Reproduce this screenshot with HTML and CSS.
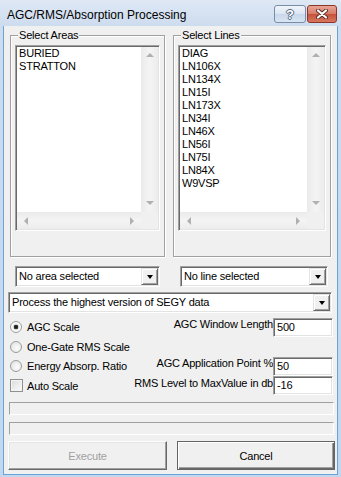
FILE: index.html
```html
<!DOCTYPE html>
<html lang="en">
<head>
    <meta charset="UTF-8">
    <title>AGC/RMS/Absorption Processing</title>
    <link rel="stylesheet" href="styles.css">
</head>
<body>
<div class="window">
    <div class="titlebar">
        <span class="title">AGC/RMS/Absorption Processing</span>
        <div class="caption-buttons">
            <span class="cap-btn help">?</span>
            <span class="cap-btn close">
                <svg width="12" height="10" viewBox="0 0 12 10">
                    <path d="M2 1.5 L10 8.5 M10 1.5 L2 8.5" stroke="#5a2a22" stroke-width="4" stroke-linecap="round"/>
                    <path d="M2 1.5 L10 8.5 M10 1.5 L2 8.5" stroke="#fff" stroke-width="2.2" stroke-linecap="round"/>
                </svg>
            </span>
        </div>
    </div>

    <div class="client">
        <div class="groups">
            <div class="group group-areas">
                <span class="group-label">Select Areas</span>
                <div class="listbox sunken">
                    <div class="items">
                        <div>BURIED</div>
                        <div>STRATTON</div>
                    </div>
                    <div class="vscroll"><span class="arr up"></span><span class="arr down"></span></div>
                    <div class="hscroll"><span class="arr left"></span><span class="arr right"></span></div>
                    <div class="corner"></div>
                </div>
            </div>
            <div class="group group-lines">
                <span class="group-label">Select Lines</span>
                <div class="listbox sunken">
                    <div class="items">
                        <div>DIAG</div>
                        <div>LN106X</div>
                        <div>LN134X</div>
                        <div>LN15I</div>
                        <div>LN173X</div>
                        <div>LN34I</div>
                        <div>LN46X</div>
                        <div>LN56I</div>
                        <div>LN75I</div>
                        <div>LN84X</div>
                        <div>W9VSP</div>
                    </div>
                    <div class="vscroll"><span class="arr up"></span><span class="arr down"></span></div>
                    <div class="hscroll"><span class="arr left"></span><span class="arr right"></span></div>
                    <div class="corner"></div>
                </div>
            </div>
        </div>

        <div class="combo-row">
            <div class="combo sunken combo-area"><span class="combo-text">No area selected</span><span class="drop"><span class="tri"></span></span></div>
            <div class="combo sunken combo-line"><span class="combo-text">No line selected</span><span class="drop"><span class="tri"></span></span></div>
        </div>
        <div class="combo sunken combo-wide"><span class="combo-text">Process the highest version of SEGY data</span><span class="drop"><span class="tri"></span></span></div>

        <div class="options">
            <div class="opt"><span class="radio checked"></span>AGC Scale</div>
            <div class="field-label">AGC Window Length</div>
            <div class="field sunken">500</div>

            <div class="opt"><span class="radio"></span>One-Gate RMS Scale</div>
            <div></div>
            <div></div>

            <div class="opt"><span class="radio"></span>Energy Absorp. Ratio</div>
            <div class="field-label">AGC Application Point %</div>
            <div class="field sunken">50</div>

            <div class="opt"><span class="check"></span>Auto Scale</div>
            <div class="field-label">RMS Level to MaxValue in db</div>
            <div class="field sunken">-16</div>
        </div>

        <div class="progress"></div>
        <div class="progress"></div>

        <div class="buttons">
            <div class="button disabled">Execute</div>
            <div class="button default">Cancel</div>
        </div>
    </div>
</div>
</body>
</html>
```
FILE: styles.css
```css
* {
    box-sizing: border-box;
}
body {
    margin: 0;
    font-family: "Liberation Sans", Arial, sans-serif;
    font-size: 11px;
    letter-spacing: -0.2px;
    color: #000;
}
.window {
    width: 341px;
    height: 477px;
    background: linear-gradient(#dfe9f5, #cddcef 26px, #c2d7ee);
    display: flex;
    flex-direction: column;
}

/* title bar */
.titlebar {
    height: 26px;
    display: flex;
    align-items: flex-start;
    padding-left: 7px;
}
.title {
    flex: 1;
    margin-top: 8px;
    font-size: 12px;
    line-height: 14px;
    letter-spacing: 0;
}
.caption-buttons {
    display: flex;
    gap: 1px;
    margin: 5px 4px 0 0;
}
.cap-btn {
    height: 18px;
    border-radius: 3px;
    display: flex;
    align-items: center;
    justify-content: center;
}
.help {
    width: 32px;
    border: 1px solid #7b8ca6;
    background: linear-gradient(#f1f5fb, #dbe5f2 50%, #c8d7eb 51%, #d9e5f3);
    color: #fff;
    font-weight: bold;
    font-size: 13px;
    letter-spacing: 0;
    text-shadow: 1px 0 #55657c, -1px 0 #55657c, 0 1px #55657c, 0 -1px #55657c;
}
.close {
    width: 30px;
    border: 1px solid #8a3528;
    background: linear-gradient(#eaa596, #d57a66 50%, #c5513b 51%, #d9765d);
}

/* client area */
.client {
    margin: 0 3px 2px;
    height: 449px;
    background: #f0f0f0;
    border: 1px solid #6aa3d9;
    border-top: 0;
    display: flex;
    flex-direction: column;
}
.sunken {
    border: 1px solid;
    border-color: #a0a0a0 #fff #fff #a0a0a0;
    padding: 1px;
    box-shadow: inset 1px 1px #696969, inset -1px -1px #e3e3e3;
    background: #fff;
}

/* group boxes */
.groups {
    display: flex;
    gap: 8px;
    margin: 9px 0 0 6px;
}
.group {
    position: relative;
    border: 1px solid #a0a0a0;
    box-shadow: inset 1px 1px #fff, 1px 1px #fff;
    padding: 9px 4px 25px;
}
.group-areas {
    width: 155px;
}
.group-lines {
    width: 158px;
}
.group-label {
    position: absolute;
    top: -7px;
    left: 7px;
    padding: 0 1px;
    line-height: 13px;
    background: #f0f0f0;
}
.listbox {
    height: 186px;
    display: grid;
    grid-template-columns: 1fr 17px;
    grid-template-rows: 1fr 17px;
}
.items {
    padding: 0 2px;
    line-height: 13px;
}
.vscroll {
    background: linear-gradient(to right, #eaeaea, #f4f4f4 50%, #ececec);
    display: flex;
    flex-direction: column;
    align-items: center;
    justify-content: space-between;
    padding: 6px 0 7px;
}
.hscroll {
    background: linear-gradient(#eaeaea, #f4f4f4 50%, #ececec);
    display: flex;
    align-items: center;
    justify-content: space-between;
    padding: 0 7px 0 7px;
}
.corner {
    background: #f0f0f0;
}
.arr {
    width: 0;
    height: 0;
    border: 4px solid transparent;
}
.arr.up {
    border-top: 0;
    border-bottom-color: #b0b0b0;
}
.arr.down {
    border-bottom: 0;
    border-top-color: #b0b0b0;
}
.arr.left {
    border-left: 0;
    border-right-color: #b0b0b0;
}
.arr.right {
    border-right: 0;
    border-left-color: #b0b0b0;
}

/* combo boxes */
.combo-row {
    display: flex;
    gap: 20px;
    margin: 9px 0 0 11px;
}
.combo {
    height: 21px;
    display: flex;
}
.combo-area {
    width: 145px;
}
.combo-line {
    width: 148px;
}
.combo-wide {
    width: 324px;
    margin: 5px 0 0 4px;
}
.combo-text {
    flex: 1;
    padding-left: 2px;
    line-height: 17px;
    white-space: nowrap;
}
.drop {
    width: 17px;
    background: #f0f0f0;
    border: 1px solid;
    border-color: #e3e3e3 #696969 #696969 #e3e3e3;
    box-shadow: inset 1px 1px #fff, inset -1px -1px #a0a0a0;
    display: flex;
    align-items: center;
    justify-content: center;
}
.tri {
    width: 0;
    height: 0;
    border-left: 3.5px solid transparent;
    border-right: 3.5px solid transparent;
    border-top: 4px solid #000;
}

/* options */
.options {
    display: grid;
    grid-template-columns: 1fr auto 60px;
    grid-template-rows: 20px 19px 20px 19px;
    margin-top: 4px;
    padding: 0 4px 0 6px;
}
.opt {
    display: flex;
    align-items: center;
    white-space: nowrap;
}
.radio {
    width: 12px;
    height: 12px;
    margin-right: 5px;
    border-radius: 50%;
    border: 1px solid #9a9b9b;
    background: radial-gradient(circle at 60% 60%, #fcfcfc, #dedede);
}
.radio.checked {
    background: radial-gradient(circle, #111 0, #333 2px, #d8d8d8 2.5px, #fdfdfd 4px);
}
.check {
    width: 13px;
    height: 13px;
    margin-right: 4px;
    border: 1px solid #8e8f8f;
    background: linear-gradient(135deg, #dcdcdc, #fbfbfb);
    box-shadow: inset 0 0 0 1px #f4f4f4;
}
.field-label {
    text-align: right;
    white-space: nowrap;
    line-height: 13px;
    padding-top: 1px;
}
.field {
    height: 19px;
    align-self: end;
    padding-left: 3px;
    line-height: 15px;
}

/* progress bars */
.progress {
    width: 325px;
    height: 13px;
    margin: 7px 0 0 5px;
    border: 1px solid;
    border-color: #a0a0a0 #fff #fff #a0a0a0;
}

/* buttons */
.buttons {
    display: flex;
    gap: 10px;
    margin: 6px 0 0 4px;
}
.button {
    height: 29px;
    display: flex;
    align-items: center;
    justify-content: center;
    font-size: 11px;
}
.button.disabled {
    width: 159px;
    color: #a0a0a0;
    border: 1px solid;
    border-color: #fff #696969 #696969 #fff;
    box-shadow: inset -1px -1px #a0a0a0, inset 1px 1px #e3e3e3;
}
.button.default {
    width: 158px;
    border: 1px solid #646464;
    box-shadow: inset 1px 1px #fff, inset -1px -1px #696969, inset -2px -2px #a0a0a0;
}
```
